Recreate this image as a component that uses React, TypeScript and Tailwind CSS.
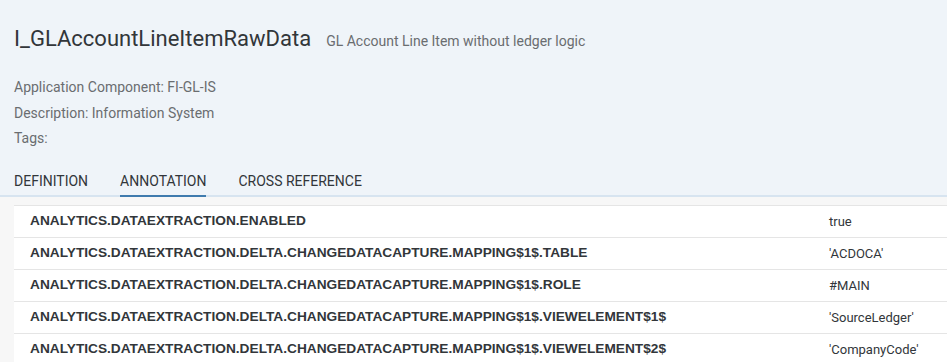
import React from 'react';

const tabs = ['Definition', 'Annotation', 'Cross Reference'];

const rows = [
  { key: 'ANALYTICS.DATAEXTRACTION.ENABLED', value: 'true' },
  { key: 'ANALYTICS.DATAEXTRACTION.DELTA.CHANGEDATACAPTURE.MAPPING$1$.TABLE', value: "'ACDOCA'" },
  { key: 'ANALYTICS.DATAEXTRACTION.DELTA.CHANGEDATACAPTURE.MAPPING$1$.ROLE', value: '#MAIN' },
  { key: 'ANALYTICS.DATAEXTRACTION.DELTA.CHANGEDATACAPTURE.MAPPING$1$.VIEWELEMENT$1$', value: "'SourceLedger'" },
  { key: 'ANALYTICS.DATAEXTRACTION.DELTA.CHANGEDATACAPTURE.MAPPING$1$.VIEWELEMENT$2$', value: "'CompanyCode'" },
];

export default function App() {
  const active = 'Annotation';

  return (
    <div className="min-h-screen bg-[#f7f7f7] font-['Roboto','Liberation_Sans',sans-serif]">
      {/* Object header */}
      <header className="bg-[#eff4f9] border-b-2 border-[#d7e4f0] px-[14px]">
        <div className="flex items-baseline gap-[15px] pt-[24px]">
          <h1 className="text-[22px] leading-[30px] text-[#32363a]">I_GLAccountLineItemRawData</h1>
          <span className="text-[14px] text-[#6a6d70]">GL Account Line Item without ledger logic</span>
        </div>

        <div className="mt-[24px] flex flex-col gap-[6.5px] text-[14px] leading-[19px] text-[#6a6d70]">
          <p>Application Component: FI-GL-IS</p>
          <p>Description: Information System</p>
          <p>Tags:</p>
        </div>

        <nav className="mt-[23px] flex gap-[32px]">
          {tabs.map((tab) => (
            <button
              key={tab}
              className={`pb-[4px] text-[14px] leading-[20px] uppercase text-[#32363a] border-b-2 -mb-[2px] ${
                tab === active ? 'border-[#3f7bae]' : 'border-transparent'
              }`}
            >
              {tab}
            </button>
          ))}
        </nav>
      </header>

      {/* Annotation table */}
      <div className="pt-[8px] pl-[14px]">
        <div className="bg-white border-t border-[#e5e5e5]">
          {rows.map((row) => (
            <div
              key={row.key}
              className="flex items-center h-[32px] border-b border-[#e5e5e5] text-[13px] text-[#32363a]"
            >
              <span className="flex-1 pl-[16px] text-[13.7px] font-bold font-['Liberation_Sans',sans-serif]">
                {row.key}
              </span>
              <span className="w-[118px]">{row.value}</span>
            </div>
          ))}
        </div>
      </div>
    </div>
  );
}
